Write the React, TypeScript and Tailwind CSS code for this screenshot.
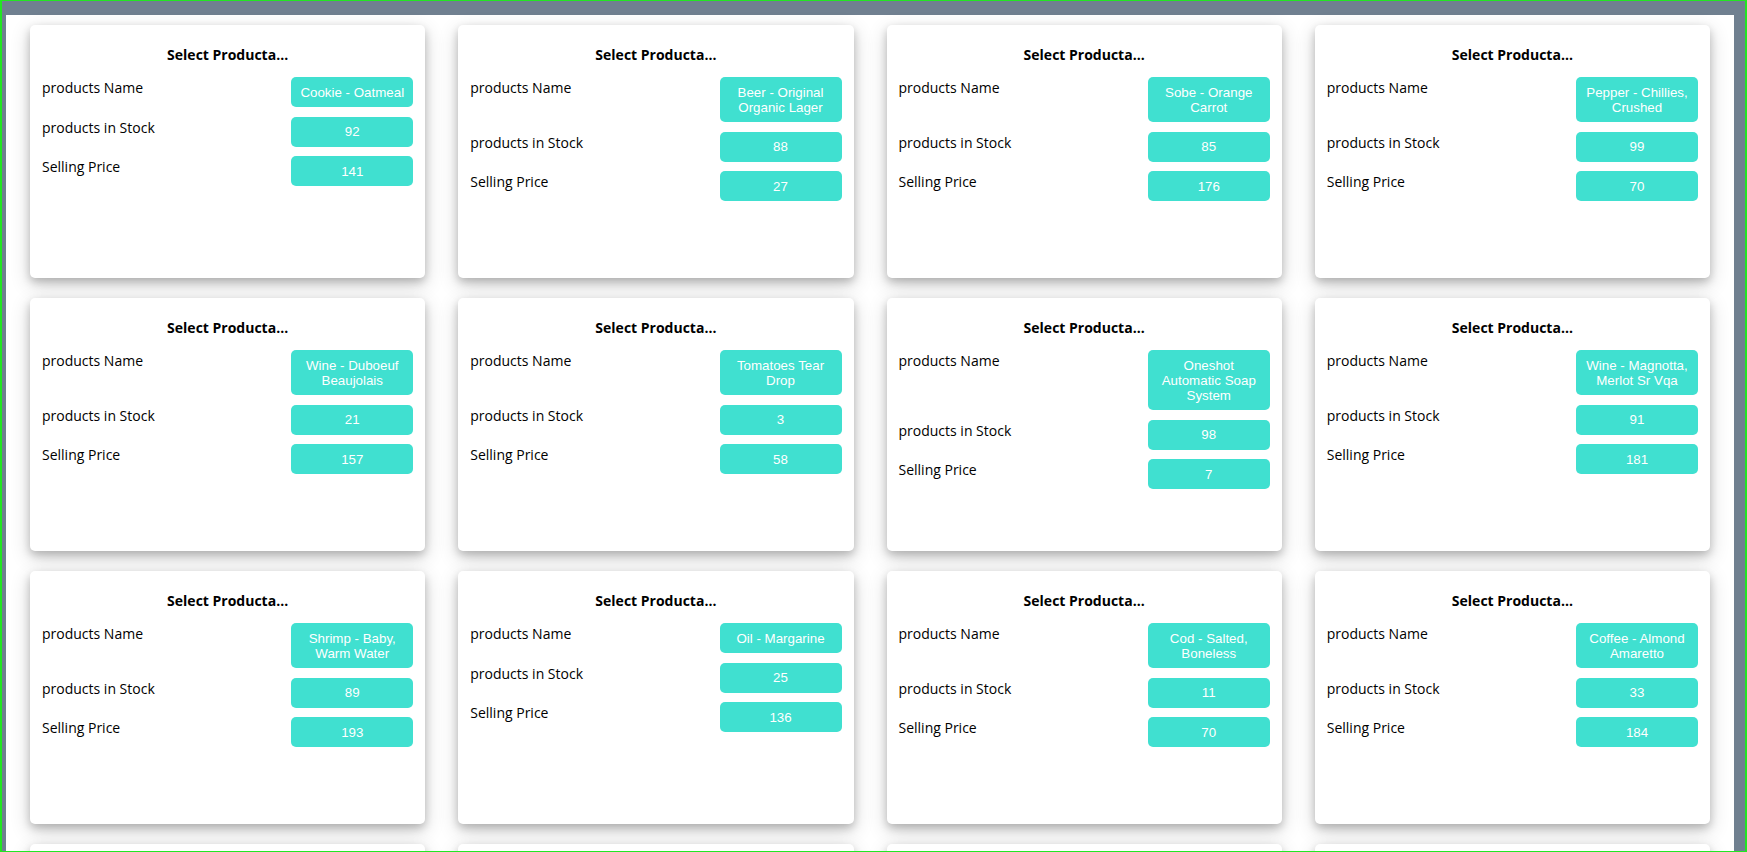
import React from 'react';

interface Product {
  id: number;
  name: string;
  stock: number;
  price: number;
}

const products: Product[] = [
  { id: 1, name: 'Cookie - Oatmeal', stock: 92, price: 141 },
  { id: 2, name: 'Beer - Original Organic Lager', stock: 88, price: 27 },
  { id: 3, name: 'Sobe - Orange Carrot', stock: 85, price: 176 },
  { id: 4, name: 'Pepper - Chillies, Crushed', stock: 99, price: 70 },
  { id: 5, name: 'Wine - Duboeuf Beaujolais', stock: 21, price: 157 },
  { id: 6, name: 'Tomatoes Tear Drop', stock: 3, price: 58 },
  { id: 7, name: 'Oneshot Automatic Soap System', stock: 98, price: 7 },
  { id: 8, name: 'Wine - Magnotta, Merlot Sr Vqa', stock: 91, price: 181 },
  { id: 9, name: 'Shrimp - Baby, Warm Water', stock: 89, price: 193 },
  { id: 10, name: 'Oil - Margarine', stock: 25, price: 136 },
  { id: 11, name: 'Cod - Salted, Boneless', stock: 11, price: 70 },
  { id: 12, name: 'Coffee - Almond Amaretto', stock: 33, price: 184 },
  { id: 13, name: 'Bread - Rye', stock: 47, price: 112 },
  { id: 14, name: 'Lettuce - Romaine', stock: 64, price: 39 },
  { id: 15, name: 'Soup - Chicken Noodle', stock: 18, price: 95 },
  { id: 16, name: 'Tea - Earl Grey', stock: 72, price: 128 },
];

const Badge: React.FC<{ children: React.ReactNode }> = ({ children }) => (
  <div className="w-[122px] shrink-0 rounded-[5px] bg-[#40e0d0] px-2 py-[7.5px] text-center font-['Liberation_Sans',Arial,sans-serif] text-[13.33px] leading-[15px] text-white">
    {children}
  </div>
);

const Row: React.FC<{ label: string; value: React.ReactNode }> = ({ label, value }) => (
  <div className="flex items-start justify-between">
    <span className="text-[14px] leading-[22px] text-black">{label}</span>
    <Badge>{value}</Badge>
  </div>
);

const ProductCard: React.FC<{ product: Product }> = ({ product }) => (
  <div className="h-[253px] rounded-[5px] bg-white px-3 pt-5 shadow-[0_4px_8px_0_rgba(0,0,0,0.2),0_6px_20px_0_rgba(0,0,0,0.19)]">
    <h3 className="text-center text-[14px] font-bold leading-[20px] text-black">Select Producta...</h3>
    <div className="mt-3 flex flex-col gap-[9.5px]">
      <Row label="products Name" value={product.name} />
      <Row label="products in Stock" value={product.stock} />
      <Row label="Selling Price" value={product.price} />
    </div>
  </div>
);

export default function App() {
  return (
    <div className="h-[852px] overflow-hidden border-x-2 border-y border-[#22e622] bg-[#708090] pl-1 pr-[11px] pt-[14px] font-['Segoe_UI','Open_Sans',sans-serif]">
      <div className="grid h-full grid-cols-4 content-start gap-x-[33px] gap-y-5 bg-white px-6 pt-[10px]">
        {products.map((p) => (
          <ProductCard key={p.id} product={p} />
        ))}
      </div>
    </div>
  );
}
